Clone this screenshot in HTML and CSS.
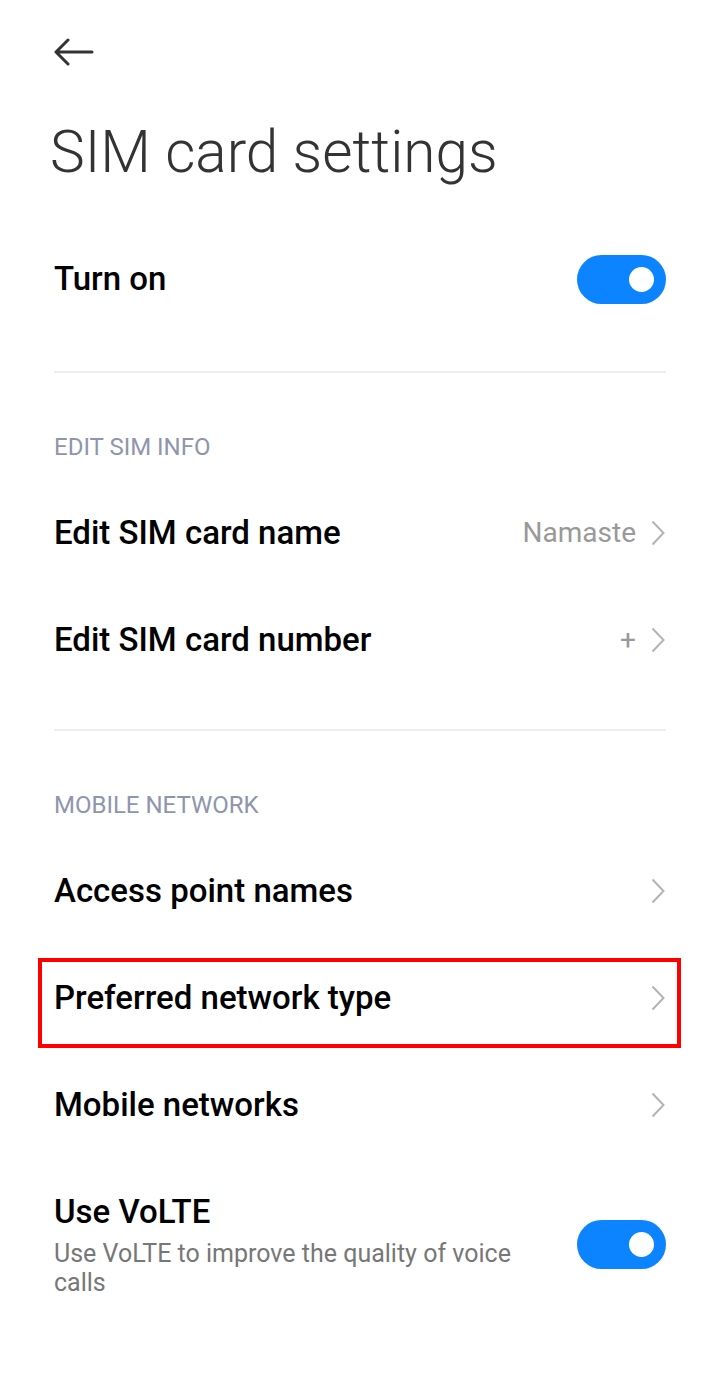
FILE: index.html
```html
<!DOCTYPE html>
<html>
<head>
<meta charset="utf-8">
<link rel="stylesheet" href="styles.css">
</head>
<body>
<div class="page">
  <div class="topbar">
    <svg class="back" width="40" height="28" viewBox="0 0 40 28"><path d="M14 2 L2 14 L14 26 M2 14 H38" fill="none" stroke="#333" stroke-width="3" stroke-linecap="round" stroke-linejoin="round"/></svg>
  </div>
  <h1 class="title">SIM card settings</h1>

  <div class="row first">
    <div class="label">Turn on</div>
    <div class="switch"><div class="knob"></div></div>
  </div>

  <div class="divider"></div>

  <div class="section">EDIT SIM INFO</div>
  <div class="row">
    <div class="label">Edit SIM card name</div>
    <div class="right"><span class="value">Namaste</span><svg class="chev" width="14" height="26" viewBox="0 0 14 26"><path d="M1.5 1.5 L12.5 13 L1.5 24.5" fill="none" stroke="#b3b3b3" stroke-width="2"/></svg></div>
  </div>
  <div class="row">
    <div class="label">Edit SIM card number</div>
    <div class="right"><span class="value plus">+</span><svg class="chev" width="14" height="26" viewBox="0 0 14 26"><path d="M1.5 1.5 L12.5 13 L1.5 24.5" fill="none" stroke="#b3b3b3" stroke-width="2"/></svg></div>
  </div>

  <div class="divider second"></div>

  <div class="section">MOBILE NETWORK</div>
  <div class="row">
    <div class="label">Access point names</div>
    <div class="right"><svg class="chev" width="14" height="26" viewBox="0 0 14 26"><path d="M1.5 1.5 L12.5 13 L1.5 24.5" fill="none" stroke="#b3b3b3" stroke-width="2"/></svg></div>
  </div>
  <div class="row highlight">
    <div class="label">Preferred network type</div>
    <div class="right"><svg class="chev" width="14" height="26" viewBox="0 0 14 26"><path d="M1.5 1.5 L12.5 13 L1.5 24.5" fill="none" stroke="#b3b3b3" stroke-width="2"/></svg></div>
  </div>
  <div class="row">
    <div class="label">Mobile networks</div>
    <div class="right"><svg class="chev" width="14" height="26" viewBox="0 0 14 26"><path d="M1.5 1.5 L12.5 13 L1.5 24.5" fill="none" stroke="#b3b3b3" stroke-width="2"/></svg></div>
  </div>
  <div class="row volte">
    <div class="texts">
      <div class="label">Use VoLTE</div>
      <div class="sub">Use VoLTE to improve the quality of voice calls</div>
    </div>
    <div class="switch"><div class="knob"></div></div>
  </div>
</div>
</body>
</html>
```
FILE: styles.css
```css
html, body {
  margin: 0;
  padding: 0;
  background: #fff;
}
body {
  font-family: Roboto, "Noto Sans", sans-serif;
  color: #000;
}
.page {
  width: 720px;
  padding: 0 54px;
  box-sizing: border-box;
}
.topbar {
  height: 104px;
  display: flex;
  align-items: flex-start;
  padding-top: 38px;
  box-sizing: border-box;
}
.back {
  display: block;
}
.title {
  margin: 0 0 0 -4px;
  font-size: 58.5px;
  font-weight: 300;
  color: #333;
  line-height: 96px;
  height: 96px;
}
.row {
  display: flex;
  align-items: center;
  justify-content: space-between;
  height: 107px;
  position: relative;
}
.row.first {
  height: 110px;
  margin-top: 24px;
}
.label {
  font-size: 33px;
  font-weight: 500;
  color: #000;
  line-height: 40px;
}
.right {
  display: flex;
  align-items: center;
  gap: 15px;
  margin-right: 1px;
}
.value {
  font-size: 28px;
  color: #999;
}
.value.plus {
  font-size: 28px;
}
.chev {
  display: block;
}
.switch {
  flex: none;
  width: 89px;
  height: 49px;
  border-radius: 25px;
  background: #0d84ff;
  display: flex;
  align-items: center;
  justify-content: flex-end;
  padding-right: 12px;
  box-sizing: border-box;
}
.knob {
  width: 25px;
  height: 25px;
  border-radius: 50%;
  background: #fff;
}
.divider {
  height: 2px;
  background: #eeeeee;
  margin-top: 37px;
}
.divider.second {
  margin-top: 36px;
}
.section {
  font-size: 24px;
  color: #8f95ad;
  line-height: 40px;
  height: 40px;
  margin-top: 54px;
  margin-bottom: 12px;
}
.highlight::after {
  content: "";
  position: absolute;
  left: -16px;
  right: -15px;
  top: 14px;
  bottom: 3px;
  border: 4px solid #ff0000;
  pointer-events: none;
}
.volte {
  height: auto;
  padding-top: 34px;
  padding-bottom: 20px;
}
.texts {
  width: 480px;
}
.sub {
  font-size: 25px;
  color: #777;
  line-height: 29px;
  margin-top: 7px;
}
```
